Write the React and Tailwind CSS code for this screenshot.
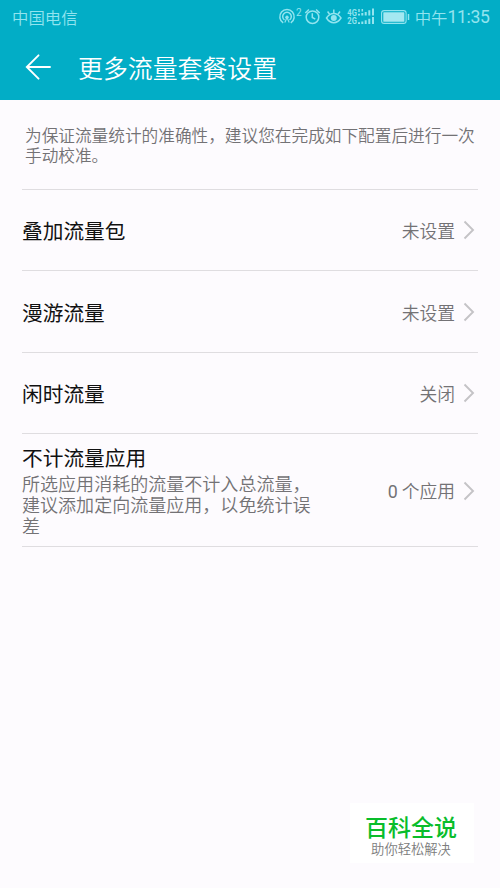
import React from "react";

const items = [
  { title: "叠加流量包", value: "未设置", height: "h-[81px]" },
  { title: "漫游流量", value: "未设置", height: "h-[82px]" },
  { title: "闲时流量", value: "关闭", height: "h-[81px]" },
];

function Chevron() {
  return (
    <svg width="12" height="20" viewBox="0 0 12 20" fill="none" stroke="#c4c3c6" strokeWidth="1.9" className="ml-2 shrink-0">
      <path d="M1.500 1.500 10 10 1.500 18.500" />
    </svg>
  );
}

function Value({ children }) {
  return (
    <div className="flex items-center pr-[3px] text-[17.8px] leading-6 font-[350] whitespace-nowrap text-[#737275]">
      <span>{children}</span>
      <Chevron />
    </div>
  );
}

function StatusIcons() {
  return (
    <svg width="134" height="22" viewBox="277 6 134 22" fill="none" stroke="#92e4ef" strokeWidth="1.5" className="shrink-0">
      {/* hotspot */}
      <path d="M283.200 22.900a7.200 7.200 0 1 1 7.600 0M284.500 20a4.300 4.300 0 1 1 5 0" />
      <circle cx="287" cy="17.200" r="1.700" fill="#92e4ef" stroke="none" />
      <path d="M287 17.500 284.800 22.500M287 17.500l2.200 5" strokeWidth="1.100" />
      <text x="296" y="16" fontSize="10" fill="#92e4ef" stroke="none" fontFamily="Roboto, sans-serif">2</text>
      {/* alarm */}
      <circle cx="312.500" cy="17.200" r="6.300" />
      <path d="M312.300 13.200v4.300l3 1.700M305.300 13l3.600-3.500M319.700 13l-3.600-3.500" />
      {/* eye */}
      <path d="M326.500 18c4-6 10.500-6 14.500 0-4 6.300-10.500 6.300-14.500 0Z" />
      <circle cx="333.800" cy="18" r="3" fill="#92e4ef" stroke="none" />
      <path d="M333.800 9.500v4M327.600 11.500l2 2.700M340 11.500l-2 2.700" />
      {/* mobile networks */}
      <g fill="#92e4ef" stroke="none" fontFamily="Roboto, sans-serif" fontSize="8.500" fontWeight="700">
        <text x="347.300" y="15.500" textLength="9.500" lengthAdjust="spacingAndGlyphs">4G</text>
        <text x="347.300" y="24" textLength="9.500" lengthAdjust="spacingAndGlyphs">2G</text>
      </g>
      <path d="M359 9v3M362.300 9v2.500" strokeWidth="1.500" />
      <path d="M359 15.500v-1.800M362.300 15.500v-2.400M365.700 15.500v-3.600M369.300 15.500v-5.300M373 15.500v-7M359 24v-1.800M362.300 24v-2.500M365.700 24v-3.700M369.300 24v-5.300M373 24v-7" strokeWidth="2" />
      {/* battery */}
      <rect x="381.600" y="10.600" width="24.500" height="12.800" rx="2.500" strokeWidth="1.100" />
      <rect x="383.300" y="12.300" width="21.100" height="9.400" rx="0.500" fill="#a4e8f1" stroke="none" />
      <path d="M408.500 14v6" strokeWidth="1.500" />
    </svg>
  );
}

export default function App() {
  return (
    <div className="relative h-[888px] w-[500px] overflow-hidden bg-[#fdfbfe] font-['Noto_Sans_CJK_SC',sans-serif]">
      <header className="h-[100px] bg-[#02adc6]">
        <div className="flex h-[34px] items-center justify-between pr-[10.5px] pl-3 text-[#92e4ef]">
          <span className="text-[16.4px] leading-6 font-[350]">中国电信</span>
          <div className="flex items-center">
            <StatusIcons />
            <span className="ml-[3.5px] flex items-center text-[16.4px] leading-6 font-[350] whitespace-nowrap">
              中午<span className="font-['Roboto',sans-serif] text-[17.6px] font-normal tracking-[-0.35px]">11:35</span>
            </span>
          </div>
        </div>
        <div className="flex h-[66px] items-center pl-[25px] text-white">
          <svg width="27" height="26" viewBox="0 0 27 26" fill="none" stroke="currentColor" strokeWidth="1.900" strokeLinecap="round">
            <path d="M25 13H1.800M13.500 1.300 1.800 13l11.700 11.700" />
          </svg>
          <h1 className="ml-[26px] text-[24.9px] leading-8 font-[350]">更多流量套餐设置</h1>
        </div>
      </header>
      <main className="px-[22px]">
        <p className="h-[90px] border-b border-[#dfdde0] pt-[25px] pl-[3px] text-[16.67px] leading-5 font-[350] whitespace-nowrap text-[#737275]">
          为保证流量统计的准确性，建议您在完成如下配置后进行一次
          <br />
          手动校准。
        </p>
        {items.map((item) => (
          <section key={item.title} className={`flex items-center justify-between border-b border-[#dfdde0] ${item.height}`}>
            <h2 className="text-[20.7px] leading-7 text-[#111]">{item.title}</h2>
            <Value>{item.value}</Value>
          </section>
        ))}
        <section className="flex h-[113px] items-center justify-between border-b border-[#dfdde0]">
          <div className="whitespace-nowrap">
            <h2 className="mb-[3px] text-[20.7px] leading-[26px] text-[#111]">不计流量应用</h2>
            <p className="text-[18.05px] leading-[21.3px] font-[350] text-[#737275]">
              所选应用消耗的流量不计入总流量，
              <br />
              建议添加定向流量应用，以免统计误
              <br />差
            </p>
          </div>
          <div className="pt-0.5">
            <Value>
              <span className="font-['Roboto',sans-serif] font-normal">0</span> 个应用
            </Value>
          </div>
        </section>
      </main>
      <aside className="absolute top-[803px] left-[350px] flex h-[60px] w-[124px] flex-col items-center bg-white pt-[9px] pr-[2px] whitespace-nowrap">
        <strong className="text-[23px] leading-[29px] font-medium text-[#09bd2b]">百科全说</strong>
        <span className="text-[13.3px] leading-[15px] font-[350] text-[#7c7c7c]">助你轻松解决</span>
      </aside>
    </div>
  );
}
